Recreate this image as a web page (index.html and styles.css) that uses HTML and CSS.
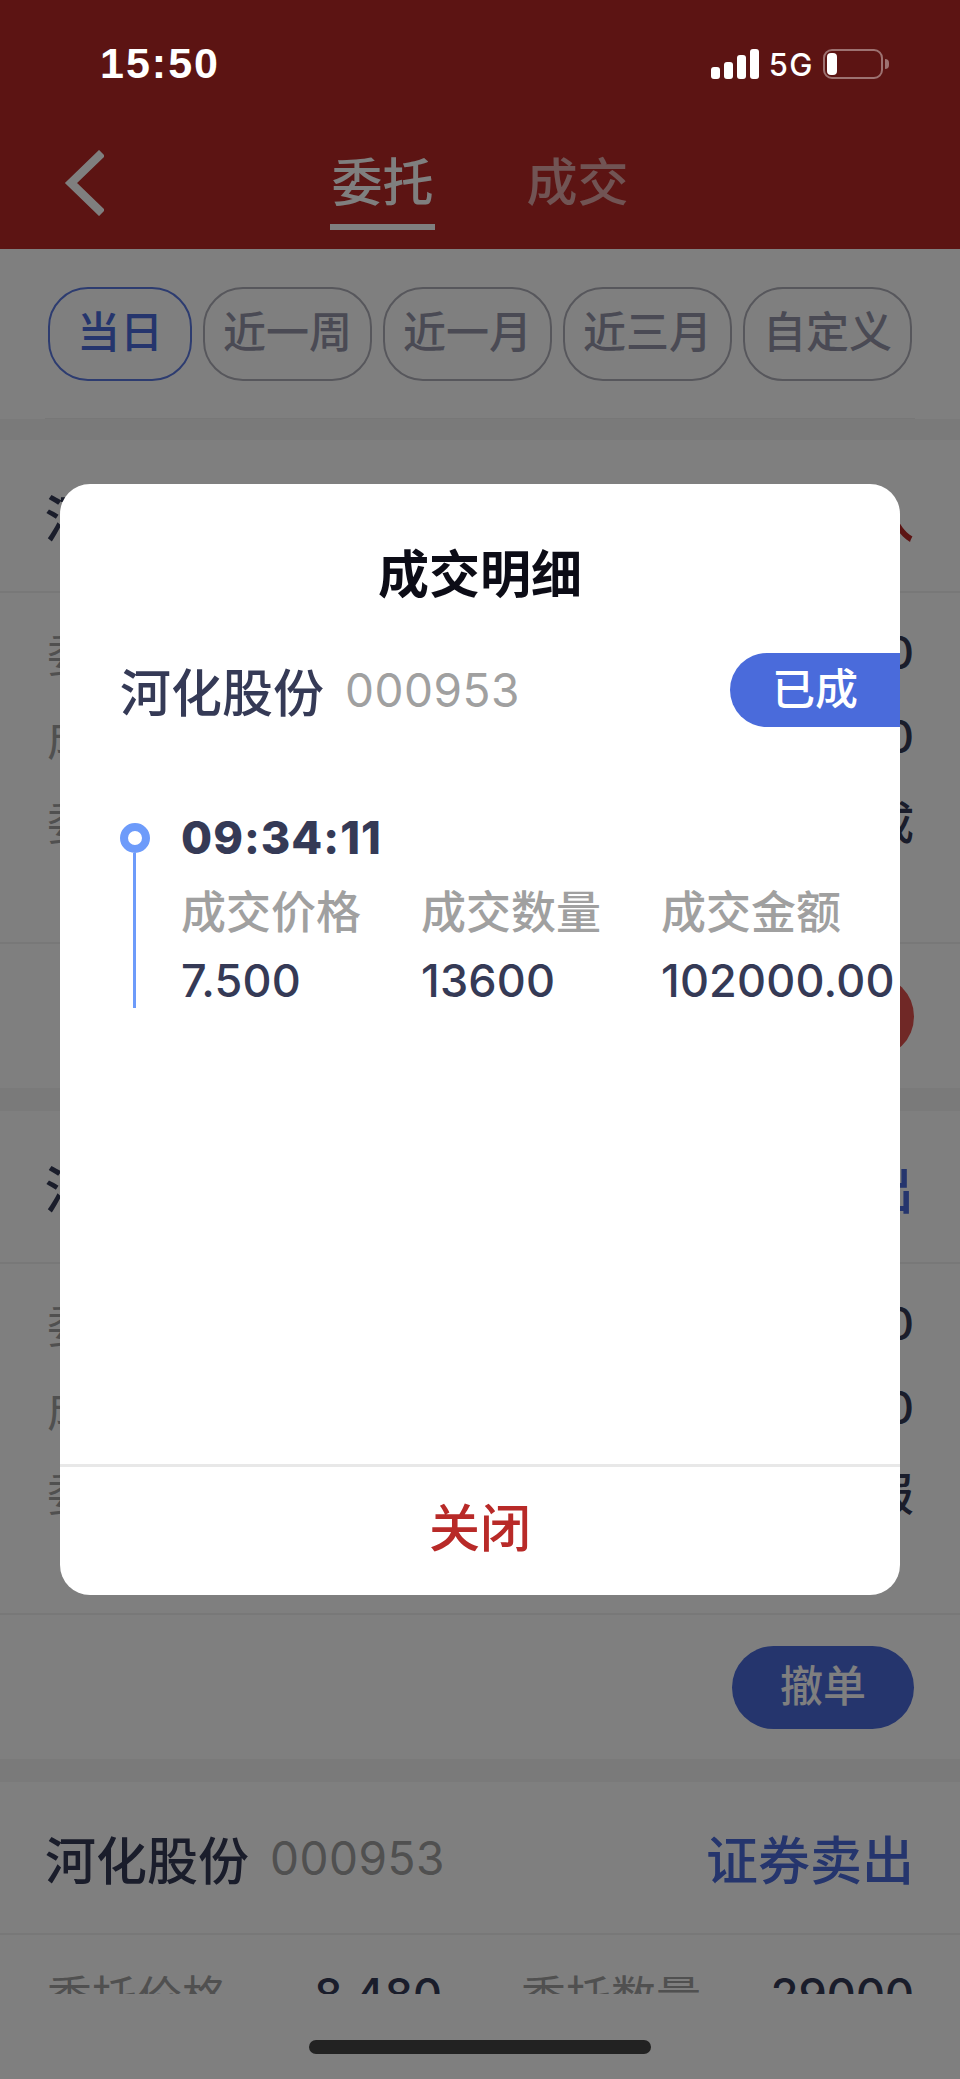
FILE: index.html
```html
<!DOCTYPE html>
<html>
  <head>
    <meta charset="UTF-8">
    <title>委托</title>
    <link rel="stylesheet" href="styles.css">
  </head>
  <body>
    <div class="phone">
      <div class="page">
        <div class="header">
          <div class="nav">
            <svg class="back" width="40" height="66" viewBox="0 0 40 66">
              <polyline points="38,3 7,33 38,63" fill="none" stroke="#fff" stroke-width="8.5"/>
            </svg>
            <div class="tabs">
              <span class="tab tab-active">委托</span>
              <span class="tab">成交</span>
            </div>
          </div>
        </div>

        <div class="filter">
          <div class="chips">
            <span class="chip chip-active">当日</span>
            <span class="chip">近一周</span>
            <span class="chip">近一月</span>
            <span class="chip">近三月</span>
            <span class="chip">自定义</span>
          </div>
        </div>

        <div class="list">
          <div class="card">
            <div class="card-title">
              <span class="stock-name">河化股份</span>
              <span class="stock-code">000953</span>
              <span class="trade-type trade-buy">证券买入</span>
            </div>
            <div class="card-rows">
              <div class="row"><span>委托价格</span><b>7.500</b><span>委托数量</span><b>13600</b></div>
              <div class="row"><span>成交价格</span><b>7.500</b><span>成交数量</span><b>13600</b></div>
              <div class="row"><span>委托时间</span><b>09:34:11</b><span>委托状态</span><b>已成</b></div>
            </div>
            <div class="card-actions"><span class="action action-red">明细</span></div>
          </div>

          <div class="card">
            <div class="card-title">
              <span class="stock-name">河化股份</span>
              <span class="stock-code">000953</span>
              <span class="trade-type">证券卖出</span>
            </div>
            <div class="card-rows">
              <div class="row"><span>委托价格</span><b>8.480</b><span>委托数量</span><b>29000</b></div>
              <div class="row"><span>成交价格</span><b>0.000</b><span>成交数量</span><b>0</b></div>
              <div class="row"><span>委托时间</span><b>09:30:02</b><span>委托状态</span><b>已报</b></div>
            </div>
            <div class="card-actions"><span class="action">撤单</span></div>
          </div>

          <div class="card">
            <div class="card-title">
              <span class="stock-name">河化股份</span>
              <span class="stock-code">000953</span>
              <span class="trade-type">证券卖出</span>
            </div>
            <div class="card-rows">
              <div class="row"><span>委托价格</span><b>8.480</b><span>委托数量</span><b>29000</b></div>
            </div>
          </div>
        </div>
      </div>

      <div class="mask">
        <div class="modal">
          <div class="modal-title">成交明细</div>
          <div class="modal-stock">
            <span class="stock-name">河化股份</span>
            <span class="stock-code">000953</span>
            <span class="badge">已成</span>
          </div>
          <div class="modal-body">
            <div class="timeline">
              <span class="dot"></span>
              <span class="line"></span>
            </div>
            <div class="deal">
              <div class="deal-time">09:34:11</div>
              <div class="deal-grid">
                <span class="deal-label">成交价格</span>
                <span class="deal-label">成交数量</span>
                <span class="deal-label">成交金额</span>
                <span class="deal-value">7.500</span>
                <span class="deal-value">13600</span>
                <span class="deal-value">102000.00</span>
              </div>
            </div>
          </div>
          <div class="modal-close">关闭</div>
        </div>
      </div>

      <div class="statusbar">
        <span class="clock">15:50</span>
        <div class="status-icons">
          <div class="signal">
            <i class="bar bar1"></i>
            <i class="bar bar2"></i>
            <i class="bar bar3"></i>
            <i class="bar bar4"></i>
          </div>
          <span class="net">5G</span>
          <div class="battery"><i class="battery-level"></i></div>
          <i class="battery-nub"></i>
        </div>
      </div>
      <div class="home-indicator"></div>
    </div>
  </body>
</html>
```

FILE: styles.css
```css
* {
  box-sizing: border-box;
}

body {
  margin: 0;
  font-family: Inter, "Noto Sans CJK SC", sans-serif;
  background-color: #fff;
}

.phone {
  position: relative;
  width: 960px;
  height: 2079px;
  overflow: hidden;
  background-color: #fff;
}

/* header */
.header {
  height: 249px;
  padding-top: 150px;
  background-color: #b82826;
}

.nav {
  display: grid;
  grid-template-columns: 1fr auto 1fr;
  align-items: start;
}

.back {
  display: block;
  margin-left: 64px;
}

.tabs {
  display: flex;
  gap: 90px;
}

.tab {
  width: 105px;
  height: 80px;
  font-size: 51px;
  line-height: 66px;
  text-align: center;
  font-weight: 500;
  white-space: nowrap;
  color: rgba(255, 255, 255, 0.6);
}

.tab-active {
  color: #fff;
  border-bottom: 6px solid #fff;
}

/* date filter */
.filter {
  height: 170px;
  padding: 38px 45px 0;
}

.chips {
  display: flex;
  gap: 11px;
  height: 132px;
  padding: 0 3px;
  border-bottom: 1px solid #eee;
}

.chip {
  width: 169px;
  height: 94px;
  border: 2px solid #aeaeb8;
  border-radius: 40px;
  font-size: 43px;
  line-height: 86px;
  text-align: center;
  font-weight: 500;
  white-space: nowrap;
  color: #9494a8;
}

.chip-active {
  width: 144px;
  border-color: #5a78e0;
  color: #4a6bdb;
}

/* order list */
.list {
  height: 1575px;
  overflow: hidden;
  background-color: #f4f4f4;
  padding-top: 21px;
  display: flex;
  flex-direction: column;
  gap: 23px;
}

.card {
  flex: none;
  background-color: #fff;
}

.card-title {
  display: flex;
  align-items: center;
  height: 153px;
  padding: 0 46px 0 45px;
  border-bottom: 2px solid #f0f0f0;
}

.stock-name {
  font-size: 51px;
  font-weight: 500;
  color: #353a56;
}

.stock-code {
  margin-left: 21px;
  font-size: 46px;
  letter-spacing: 0.5px;
  color: #a0a0a0;
}

.trade-type {
  margin-left: auto;
  font-size: 52px;
  font-weight: 500;
  color: #4a6bdb;
}

.trade-buy {
  color: #b82826;
}

.card-rows {
  height: 351px;
  padding: 17px 46px 0 47px;
  border-bottom: 2px solid #f0f0f0;
}

.row {
  display: flex;
  align-items: center;
  height: 84px;
  font-size: 45px;
  color: #a0a0a0;
}

.row b {
  flex: 1;
  font-size: 45px;
  font-weight: 500;
  text-align: right;
  color: #353a56;
}

.row b:nth-child(2) {
  flex: none;
  width: 215px;
  margin-right: 79px;
}

.card-actions {
  display: flex;
  justify-content: flex-end;
  height: 144px;
  padding: 31px 46px 0 0;
}

.action {
  width: 182px;
  height: 83px;
  border-radius: 42px;
  background-color: #4a6bdb;
  font-size: 43px;
  line-height: 80px;
  text-align: center;
  font-weight: 500;
  color: #fff;
}

.action-red {
  background-color: #e0504c;
}

/* dialog */
.mask {
  position: absolute;
  top: 0;
  left: 0;
  right: 0;
  bottom: 0;
  display: flex;
  align-items: center;
  justify-content: center;
  background-color: rgba(0, 0, 0, 0.5);
}

.modal {
  display: flex;
  flex-direction: column;
  width: 840px;
  height: 1111px;
  border-radius: 30px;
  background-color: #fff;
}

.modal-title {
  margin-top: 50px;
  height: 80px;
  font-size: 51px;
  line-height: 82px;
  font-weight: 700;
  text-align: center;
  color: #0c0c16;
}

.modal-stock {
  display: flex;
  align-items: center;
  height: 74px;
  margin-top: 39px;
  padding-left: 60px;
}

.badge {
  width: 170px;
  height: 74px;
  margin-left: auto;
  border-radius: 37px 0 0 37px;
  background-color: #4a6bdb;
  font-size: 43px;
  line-height: 72px;
  text-align: center;
  font-weight: 500;
  color: #fff;
}

.modal-body {
  flex: 1;
  display: flex;
  padding: 96px 0 0 60px;
}

.timeline {
  display: flex;
  flex-direction: column;
  align-items: center;
  width: 30px;
  height: 185px;
}

.dot {
  flex: none;
  width: 30px;
  height: 30px;
  border: 8px solid #6d9bfa;
  border-radius: 50%;
}

.line {
  flex: 1;
  width: 3px;
  margin-right: 1px;
  background-color: #6d9bfa;
}

.deal {
  margin-left: 31px;
}

.deal-time {
  height: 30px;
  font-size: 45px;
  line-height: 30px;
  letter-spacing: 1px;
  font-weight: 800;
  color: #353a56;
}

.deal-grid {
  display: grid;
  grid-template-columns: repeat(3, 240px);
  grid-auto-rows: 71px;
  margin-top: 21px;
  align-items: center;
}

.deal-label {
  font-size: 45px;
  font-weight: 500;
  white-space: nowrap;
  color: #a0a0a0;
}

.deal-value {
  font-size: 45px;
  font-weight: 500;
  letter-spacing: 0.2px;
  white-space: nowrap;
  color: #353a56;
}

.modal-close {
  height: 131px;
  border-top: 3px solid #e8e8e8;
  font-size: 51px;
  line-height: 124px;
  text-align: center;
  font-weight: 500;
  color: #b82a28;
}

/* system bars stay bright above the mask */
.statusbar {
  position: absolute;
  top: 0;
  left: 0;
  right: 0;
  height: 100px;
  display: flex;
  justify-content: space-between;
  align-items: flex-start;
  padding: 38px 71px 0 100px;
  color: #fff;
}

.clock {
  font-family: "Liberation Sans", sans-serif;
  font-size: 43px;
  line-height: 50px;
  font-weight: 700;
  letter-spacing: 2px;
}

.status-icons {
  display: flex;
  align-items: flex-end;
  height: 41px;
}

.signal {
  display: flex;
  align-items: flex-end;
  gap: 4px;
}

.bar {
  display: block;
  width: 9px;
  border-radius: 3px;
  background-color: #fff;
}

.bar1 { height: 12px; }
.bar2 { height: 17px; }
.bar3 { height: 24px; }
.bar4 { height: 30px; }

.net {
  margin-left: 10px;
  font-size: 31px;
  line-height: 29px;
  letter-spacing: 1.5px;
  font-weight: 500;
}

.battery {
  width: 60px;
  height: 30px;
  margin-left: 9px;
  padding: 2px;
  border: 2px solid rgba(255, 255, 255, 0.4);
  border-radius: 9px;
}

.battery-level {
  display: block;
  width: 10px;
  height: 22px;
  border-radius: 4px;
  background-color: #fff;
}

.battery-nub {
  display: block;
  width: 4px;
  height: 10px;
  margin: 0 0 10px 2px;
  border-radius: 0 4px 4px 0;
  background-color: rgba(255, 255, 255, 0.4);
}

.home-indicator {
  position: absolute;
  left: 309px;
  bottom: 25px;
  width: 342px;
  height: 14px;
  border-radius: 7px;
  background-color: #222;
}
```
